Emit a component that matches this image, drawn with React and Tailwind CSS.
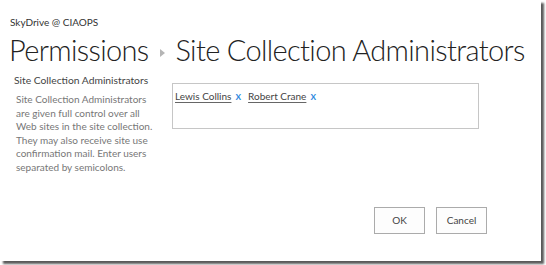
import React from "react";

const font = { fontFamily: 'Lato, "Noto Sans", sans-serif' };

const Person = ({ name }) => (
	<span className="mr-[7px] whitespace-nowrap">
		<span className="text-[#444] underline underline-offset-2 decoration-[#666]">{name}</span>
		<span className="ml-[4px] text-[11px] font-semibold text-[#2f8ae0]">x</span>
	</span>
);

const App = () => {
	return (
		<div className="w-[546px] h-[265px] bg-white" style={font}>
			<div className="w-[541px] h-[261px] bg-white shadow-[3px_3px_2px_rgba(0,0,0,0.65)] flex flex-col">
				{/* Header */}
				<div className="pl-[10px] pt-[15px] text-[10px] leading-[14px] text-[#333]">
					SkyDrive @ CIAOPS
				</div>
				<div className="pl-[9px] mt-[3px] flex items-center text-[29px] leading-[36px] font-light tracking-[-0.65px] text-[#222] whitespace-nowrap">
					<span>Permissions</span>
					<span className="ml-[12px] mr-[10px] mt-[6px] w-0 h-0 border-y-[4px] border-y-transparent border-l-[5px] border-l-[#b5b5b5]" />
					<span>Site Collection Administrators</span>
				</div>

				{/* Body */}
				<div className="flex mt-[5px]">
					<div className="w-[172px] pl-[14px]">
						<div className="text-[10.3px] leading-[14px] text-[#444] whitespace-nowrap">
							Site Collection Administrators
						</div>
						<p className="w-[141px] pl-[2px] mt-[6px] text-[10px] leading-[13.5px] text-[#777]">
							Site Collection Administrators are given full control over all Web sites in the site collection. They may also receive site use confirmation mail. Enter users separated by semicolons.
						</p>
					</div>
					<div className="pt-[10px]">
						<div className="w-[307px] h-[46px] border border-[#c6c6c6] px-[2px] pt-[5px] text-[10px] leading-[14px]">
							<Person name="Lewis Collins" />
							<Person name="Robert Crane" />
						</div>
					</div>
				</div>

				{/* Actions */}
				<div className="flex justify-end gap-[11px] pr-[54px] mt-auto pb-[27px]">
					<button className="w-[51px] h-[27px] border border-[#ababab] bg-[#fdfdfd] text-[10px] text-[#444]">
						OK
					</button>
					<button className="w-[51px] h-[27px] border border-[#ababab] bg-[#fdfdfd] text-[10px] text-[#444]">
						Cancel
					</button>
				</div>
			</div>
		</div>
	);
};

export default App;
